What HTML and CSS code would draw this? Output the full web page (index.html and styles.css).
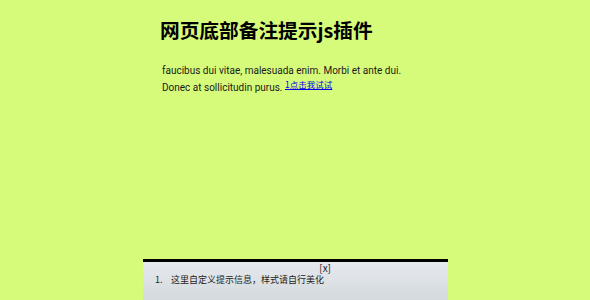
FILE: index.html
```html
<!DOCTYPE html>
<html lang="zh-CN">
<head>
    <meta charset="UTF-8">
    <title>网页底部备注提示js插件</title>
    <link rel="stylesheet" href="styles.css">
</head>
<body>

<div class="wrap">
    <h1>网页底部备注提示js插件</h1>
    <p>faucibus dui vitae, malesuada enim. Morbi et ante dui. Donec at sollicitudin purus. <sup><a href="#note1">1点击我试试</a></sup></p>
</div>

<div class="footnote" id="footnote">
    <span class="close">[x]</span>
    <ol>
        <li id="note1">这里自定义提示信息，样式请自行美化</li>
    </ol>
</div>

</body>
</html>
```

FILE: styles.css
```css
body {
    margin: 0;
    padding: 0;
    background-color: #d6fa7a;
    font-family: Roboto, "Noto Sans CJK SC", sans-serif;
    color: #111;
}
.wrap {
    width: 250px;
    margin: 0 auto;
    padding: 13px 20px 0 0;
}
h1 {
    margin: 0;
    font-size: 19.7px;
    line-height: 34px;
    font-weight: bold;
    color: #000;
    white-space: nowrap;
    font-family: "Noto Sans CJK SC", sans-serif;
}
p {
    margin: 15px 0 0 2px;
    font-size: 10px;
    line-height: 17px;
    color: #1a1a1a;
}
sup {
    font-size: 8.5px;
    line-height: 0;
    vertical-align: 3px;
}
sup a {
    color: #0000ee;
    font-family: "Noto Sans CJK SC", sans-serif;
}
.footnote {
    position: fixed;
    bottom: 0;
    left: 143px;
    width: 305px;
    height: 38px;
    border-top: 3px solid #000;
    background: linear-gradient(#e6eaee, #d3d9dd);
    font-family: "Noto Sans CJK SC", sans-serif;
    font-size: 9px;
    color: #222;
}
.close {
    display: block;
    width: 188px;
    text-align: right;
    font-size: 10px;
    line-height: 12px;
    cursor: pointer;
}
.footnote ol {
    margin: 0;
    padding-left: 12px;
    line-height: 12px;
    list-style: none;
}
.footnote li::before {
    content: counter(list-item) ".";
    display: inline-block;
    width: 16px;
}
```
